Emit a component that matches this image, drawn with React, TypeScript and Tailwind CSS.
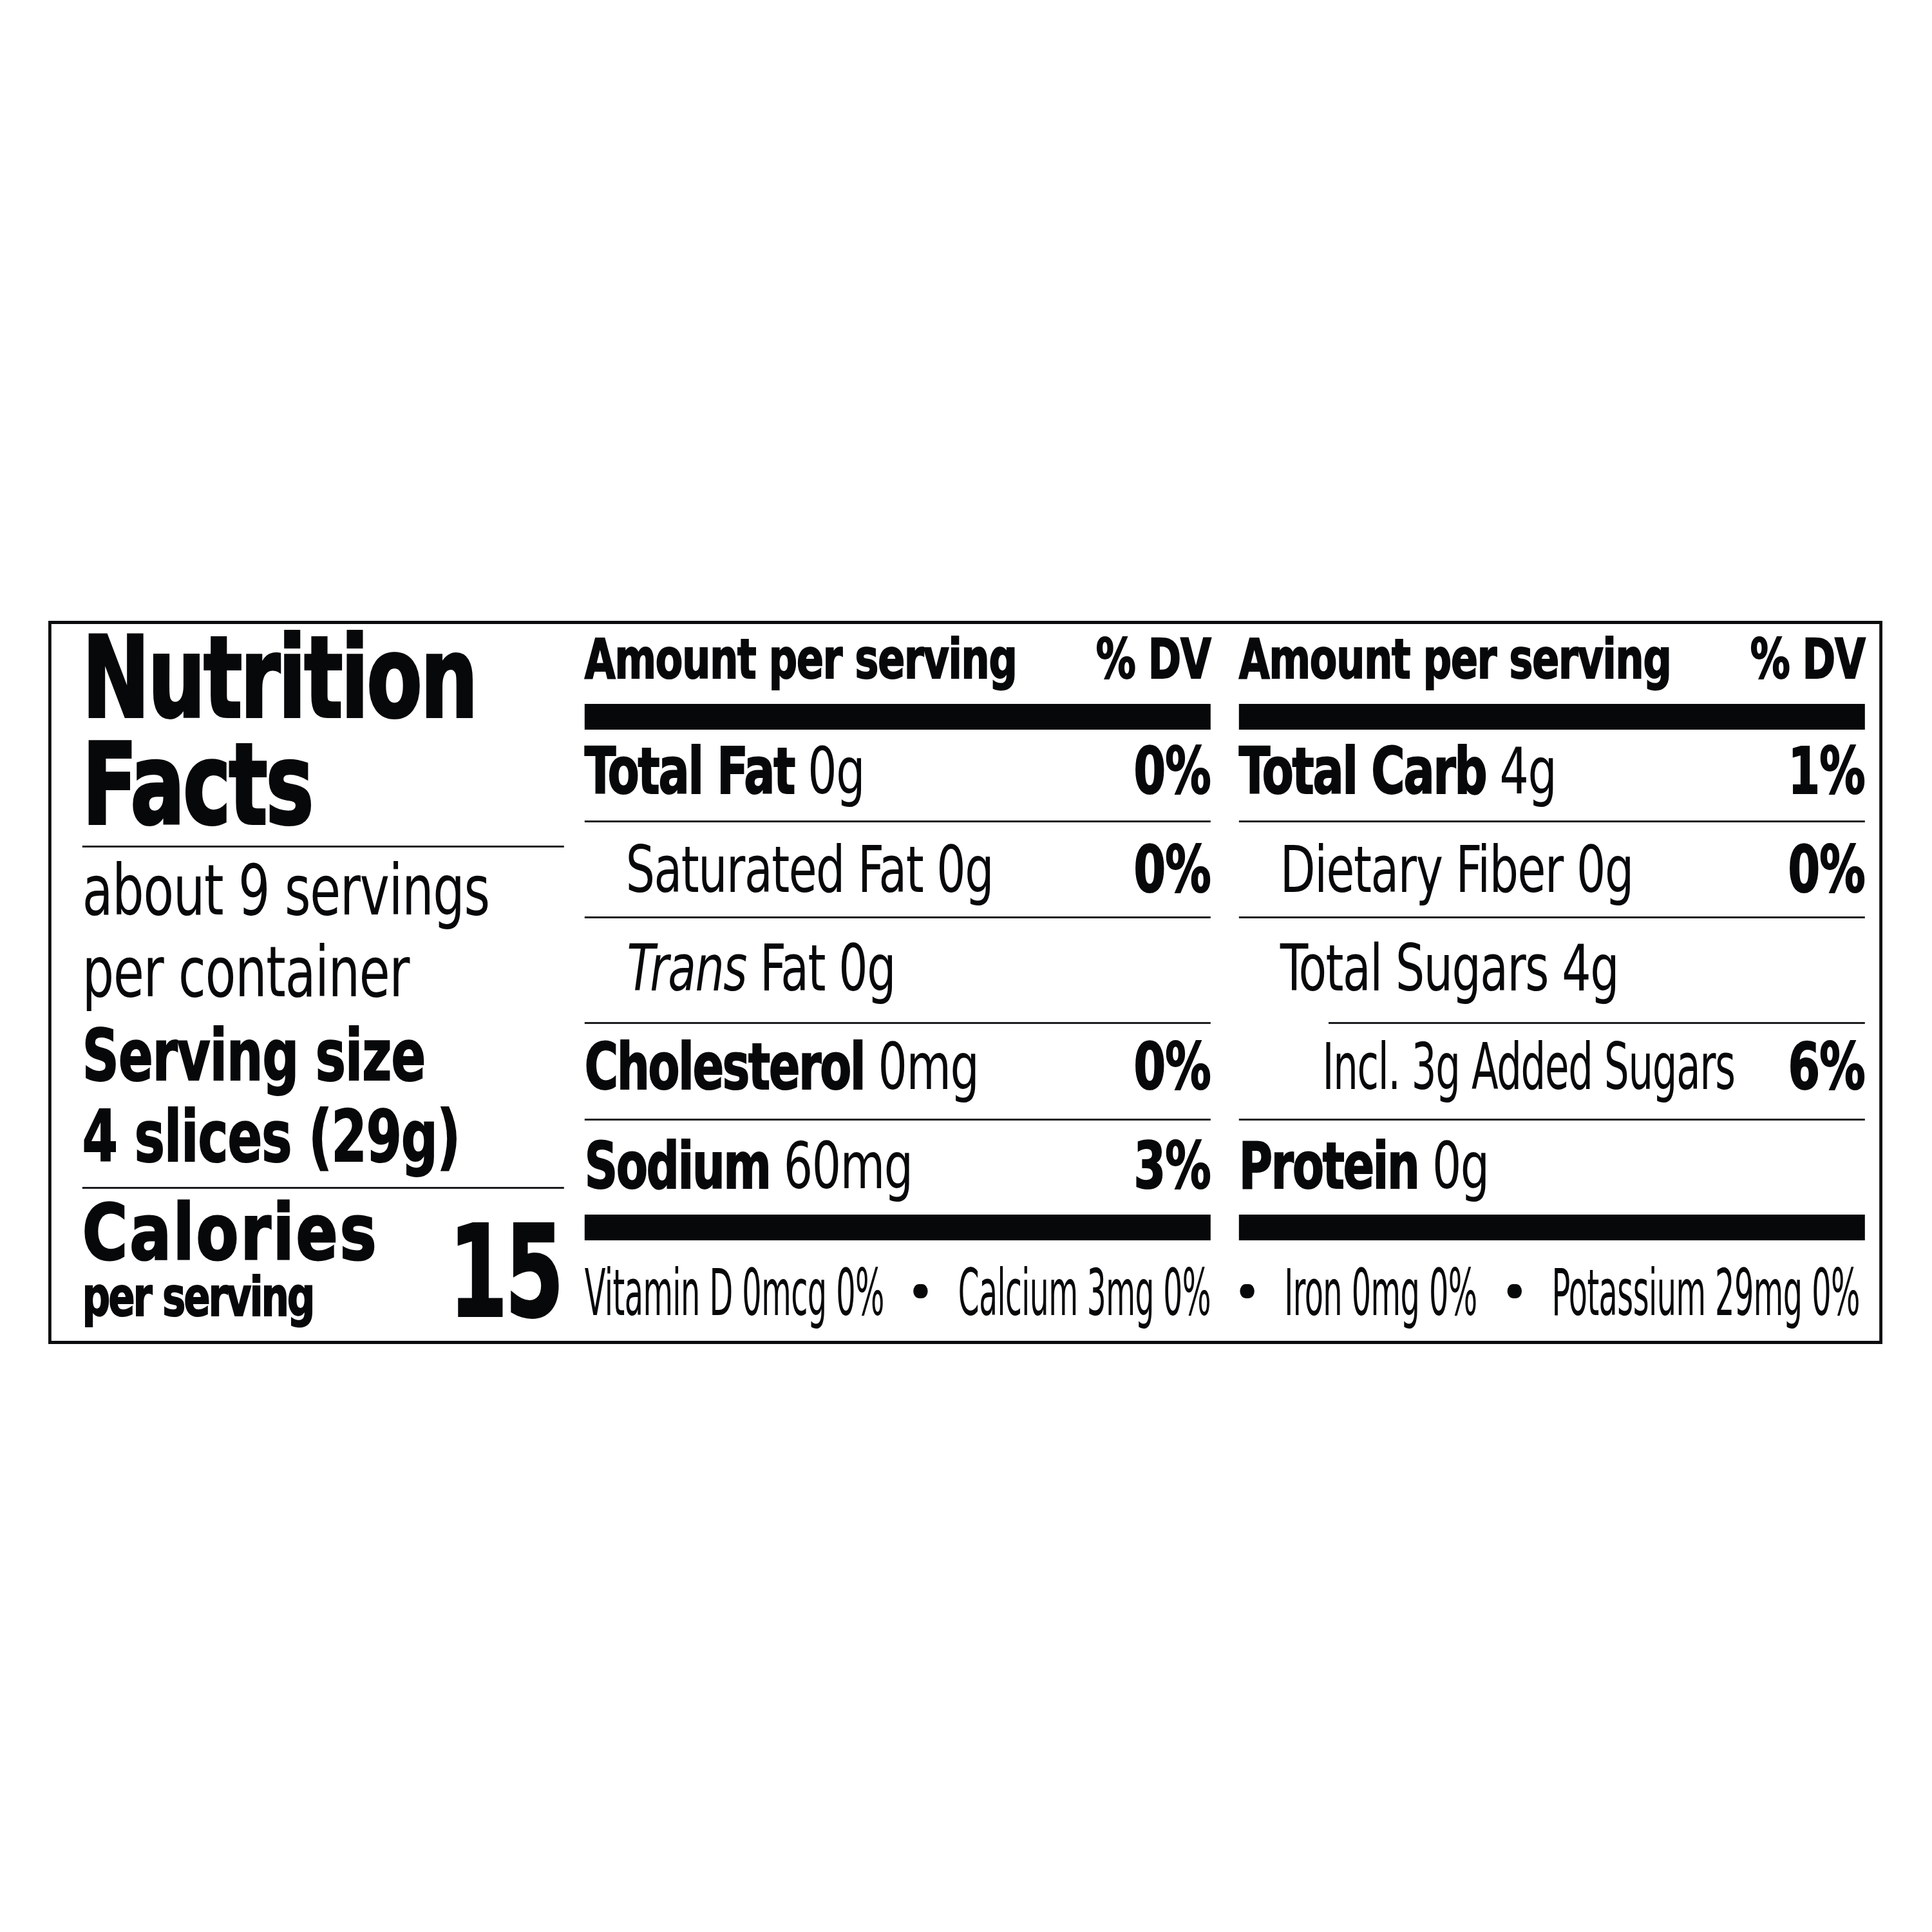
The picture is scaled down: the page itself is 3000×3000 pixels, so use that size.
import type { ReactNode } from 'react';

// The label is laid out 25% wider and squeezed with scale-x-[0.8] to get the condensed type look.

function Rule({ className = '' }: { className?: string }) {
  return <div className={`h-[3px] bg-[#1c1d1f] ${className}`} />;
}

function Bar() {
  return <div className="h-[40px] bg-[#07080a]" />;
}

function Row({ className, children, dv }: { className: string; children: ReactNode; dv?: string }) {
  return (
    <div className={`flex justify-between items-start text-[99px] leading-none ${className}`}>
      <span className="whitespace-nowrap tracking-[-0.018em]">{children}</span>
      {dv && <span className="font-bold tracking-[-0.01em] [-webkit-text-stroke:2px_#07080a]">{dv}</span>}
    </div>
  );
}

function Bold({ children }: { children: ReactNode }) {
  return <span className="font-bold tracking-[-0.027em] [-webkit-text-stroke:2px_#07080a]">{children}</span>;
}

function Dot() {
  return <span className="mt-[36px] w-[28px] h-[22px] shrink-0 rounded-full bg-[#07080a]" />;
}

function Mineral({ className, inner = 'scale-x-[0.67]', children }: { className: string; inner?: string; children: ReactNode }) {
  return (
    <span className={`shrink-0 whitespace-nowrap ${className}`}>
      <span className={`inline-block origin-left tracking-[-0.01em] ${inner}`}>{children}</span>
    </span>
  );
}

function Header() {
  return (
    <div className="h-[124px] pt-[11px] flex justify-between items-start text-[86px] leading-none font-bold tracking-[-0.017em] [-webkit-text-stroke:2px_#07080a]">
      <span className="whitespace-nowrap">Amount per serving</span>
      <span className="whitespace-nowrap">% DV</span>
    </div>
  );
}

export default function App() {
  return (
    <div className="w-[3000px] h-[3000px] overflow-hidden bg-white pt-[964px] pl-[75px] text-[#07080a] font-['DejaVu_Sans_Condensed','DejaVu_Sans',sans-serif]">
      <div className="origin-top-left scale-x-[0.8] w-[3560px] h-[1123px] border-y-[5px] border-x-[6px] border-[#0b0c0e] flex pl-[60px] pr-[28px]">
        {/* Left: title, servings, calories */}
        <div className="w-[935px] shrink-0 flex flex-col">
          <h1 className="mt-[1px] whitespace-nowrap text-[174px] leading-[166px] font-bold tracking-[-0.02em] [-webkit-text-stroke:4px_#07080a]">
            Nutrition
            <br />
            Facts
          </h1>
          <Rule className="mt-[11px]" />
          <p className="mt-[3px] whitespace-nowrap text-[108px] leading-[127px] tracking-[-0.013em]">
            about 9 servings
            <br />
            per container
          </p>
          <p className="mt-[3px] whitespace-nowrap text-[110px] leading-[126px] font-bold tracking-[-0.01em] [-webkit-text-stroke:2px_#07080a]">
            Serving size
            <br />
            4 slices (29g)
          </p>
          <Rule className="mt-[15px]" />
          <div className="flex-1 flex justify-between">
            <div className="pt-[8px]">
              <div className="font-['DejaVu_Sans',sans-serif] font-bold text-[120px] leading-none tracking-[0.03em] [-webkit-text-stroke:3px_#07080a]">
                Calories
              </div>
              <div className="whitespace-nowrap text-[84px] leading-[80px] font-bold tracking-[-0.04em] [-webkit-text-stroke:2px_#07080a]">
                per serving
              </div>
            </div>
            <div className="pt-[31px] pr-[4px] text-[196px] leading-none font-bold [-webkit-text-stroke:4px_#07080a]">
              <span className="inline-block origin-right scale-x-[0.92] tracking-[-0.02em]">15</span>
            </div>
          </div>
        </div>

        {/* Middle column */}
        <div className="ml-[40px] w-[1215px] shrink-0 flex flex-col">
          <Header />
          <Bar />
          <Row className="h-[141px] pt-[15px]" dv="0%">
            <Bold>Total Fat</Bold> 0g
          </Row>
          <Rule />
          <Row className="h-[146px] pt-[24px] pl-[80px]" dv="0%">
            Saturated Fat 0g
          </Row>
          <Rule />
          <Row className="h-[161px] pt-[28px] pl-[82px]">
            <i>Trans</i> Fat 0g
          </Row>
          <Rule />
          <Row className="h-[147px] pt-[17px]" dv="0%">
            <Bold>Cholesterol</Bold> 0mg
          </Row>
          <Rule />
          <Row className="h-[146px] pt-[21px]" dv="3%">
            <Bold>Sodium</Bold> 60mg
          </Row>
          <Bar />
          <div className="flex-1 pt-[32px] flex justify-between items-start text-[99px] leading-none">
            <Mineral className="w-[579px]">Vitamin D 0mcg 0%</Mineral>
            <Dot />
            <Mineral className="w-[490px]" inner="scale-x-[0.66]">
              Calcium 3mg 0%
            </Mineral>
          </div>
        </div>

        {/* Right column */}
        <div className="ml-[55px] w-[1215px] shrink-0 flex flex-col">
          <Header />
          <Bar />
          <Row className="h-[141px] pt-[15px]" dv="1%">
            <Bold>Total Carb</Bold> 4g
          </Row>
          <Rule />
          <Row className="h-[146px] pt-[24px] pl-[80px]" dv="0%">
            Dietary Fiber 0g
          </Row>
          <Rule />
          <Row className="h-[161px] pt-[28px] pl-[80px]">Total Sugars 4g</Row>
          <Rule className="ml-[174px]" />
          <div className="h-[147px] pt-[17px] pl-[162px] flex justify-between items-start text-[99px] leading-none">
            <span className="w-[800px] shrink-0 whitespace-nowrap">
              <span className="inline-block origin-left scale-x-[0.855] tracking-[-0.018em]">Incl. 3g Added Sugars</span>
            </span>
            <span className="font-bold tracking-[-0.01em] [-webkit-text-stroke:2px_#07080a]">6%</span>
          </div>
          <Rule />
          <Row className="h-[146px] pt-[21px]">
            <Bold>Protein</Bold> 0g
          </Row>
          <Bar />
          <div className="flex-1 pt-[32px] pl-[2px] flex gap-[58px] items-start text-[99px] leading-none">
            <Dot />
            <Mineral className="w-[375px]">Iron 0mg 0%</Mineral>
            <Dot />
            <Mineral className="w-[592px]">Potassium 29mg 0%</Mineral>
          </div>
        </div>
      </div>
    </div>
  );
}
